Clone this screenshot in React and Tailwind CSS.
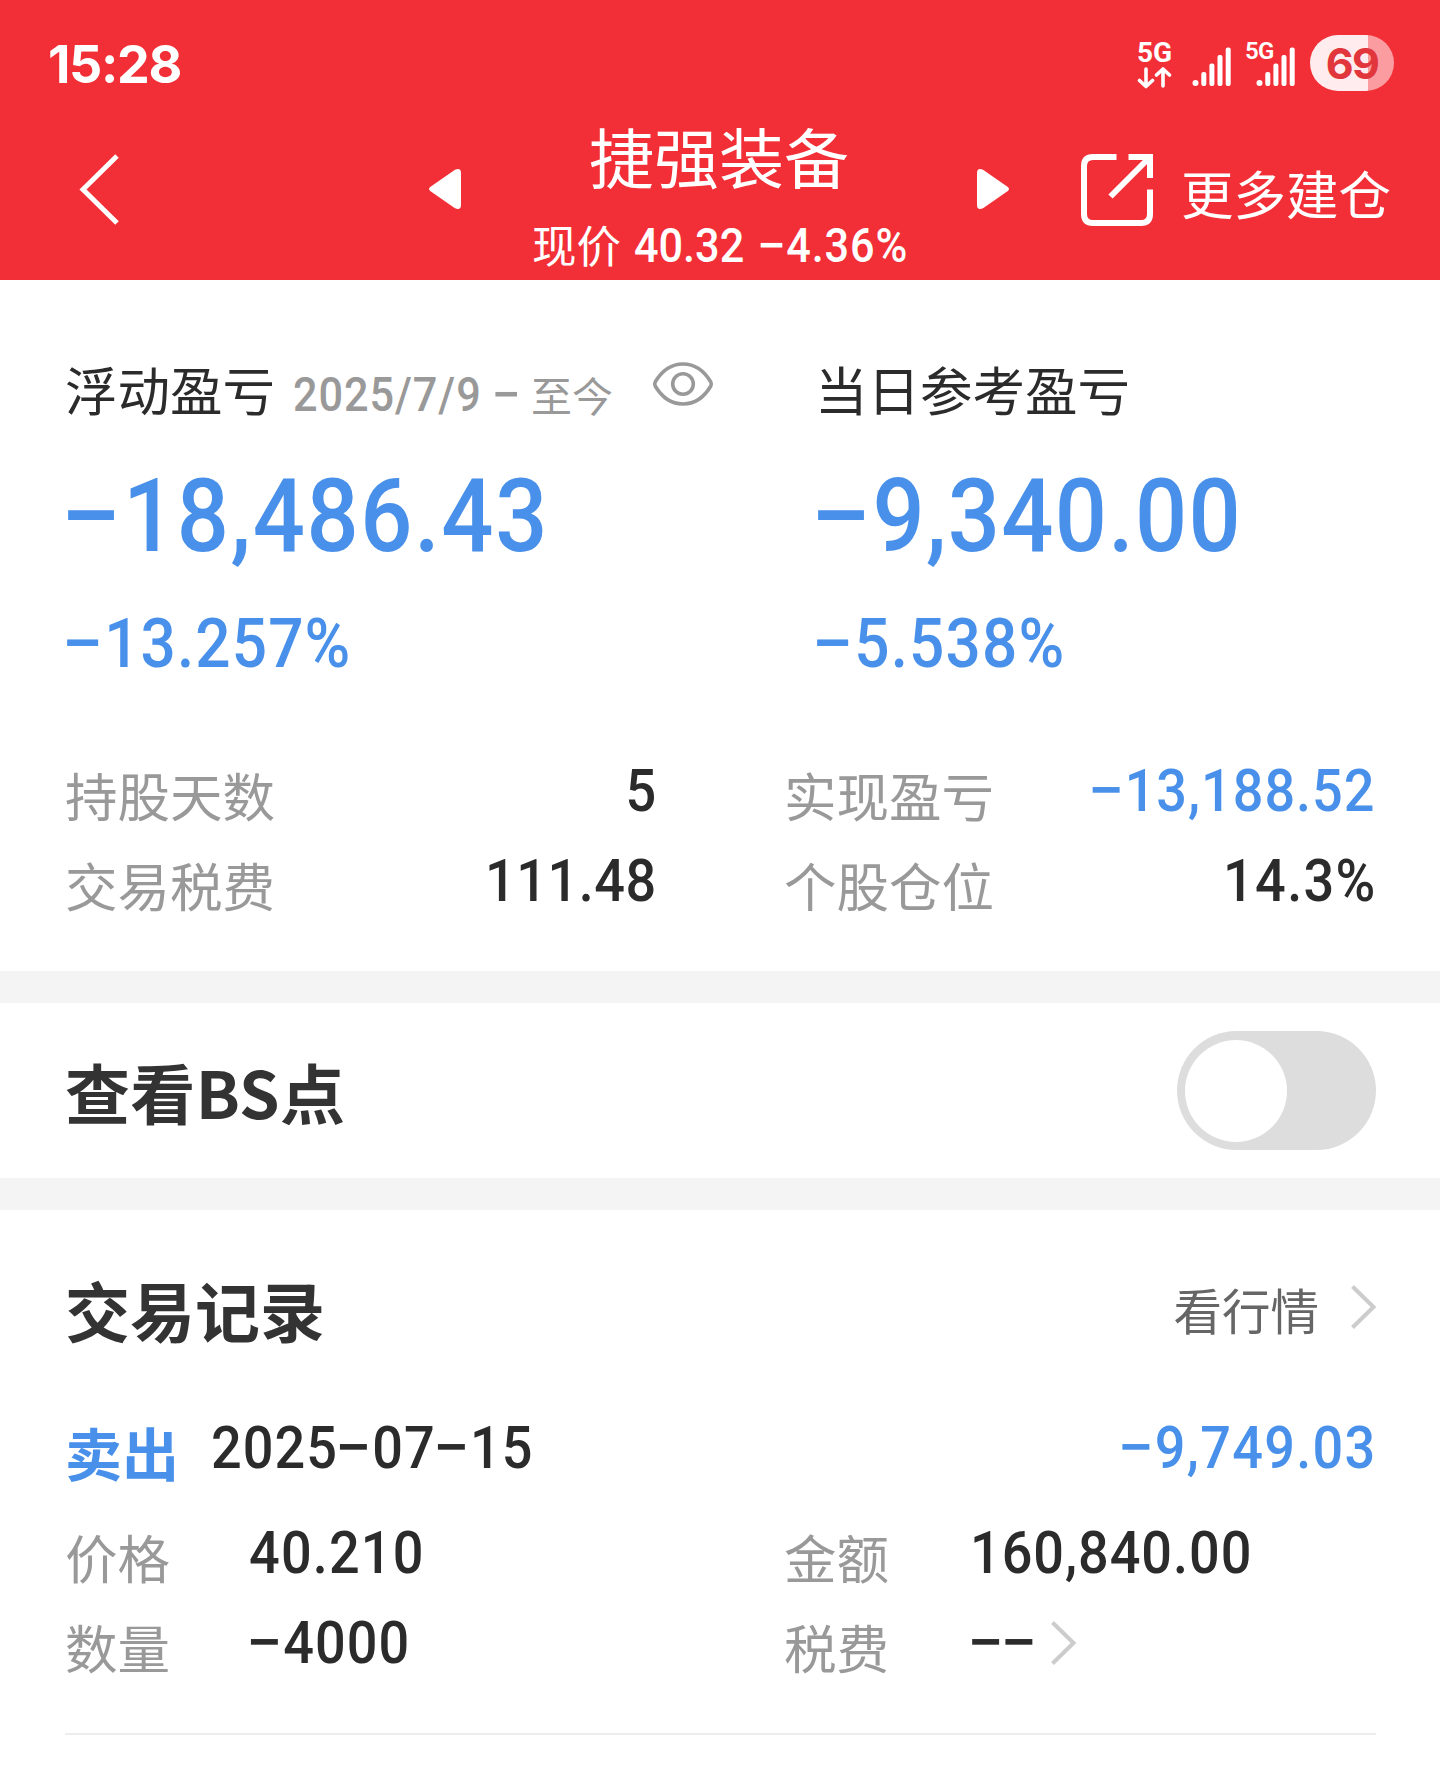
import clsx from 'clsx';

const stats = [
  { label: '持股天数', value: '5' },
  { label: '实现盈亏', value: '−13,188.52', loss: true, tracking: 'tracking-[0.018em]' },
  { label: '交易税费', value: '111.48', tracking: 'tracking-[0.01em] -mr-px' },
  { label: '个股仓位', value: '14.3%', tracking: 'tracking-[0.025em] -mr-0.5' },
];

// Condensed figures, squeezed from the side they are aligned to.
// The minus sign is drawn a little wider than the font has it.
const Num = ({ children, className }) => (
  <span
    className={clsx(
      "inline-block shrink-0 whitespace-nowrap font-['Roboto','Noto_Sans_CJK_SC',sans-serif] font-medium",
      className
    )}
  >
    {children.split(/(−)/).map((part, i) =>
      part === '−' ? (
        <span key={i} className="mr-[0.05em] inline-block scale-x-120">
          −
        </span>
      ) : (
        part
      )
    )}
  </span>
);

const SignalBars = () => (
  <svg width="40" height="40" viewBox="0 0 40 40" fill="#fff">
    <circle cx="3.500" cy="36" r="3" />
    <rect x="9.300" y="25" width="5" height="14" rx="2" />
    <rect x="17.400" y="16.500" width="5" height="22.500" rx="2" />
    <rect x="25.500" y="8" width="5" height="31" rx="2" />
    <rect x="33.700" y="0.500" width="5" height="38.500" rx="2" />
  </svg>
);

const StatusBar = () => (
  <div className="flex h-[126px] items-center justify-between pl-12 pr-[46px]">
    <span className="pt-1 font-['Inter',sans-serif] text-[52px] font-bold leading-none tracking-[-0.025em]">
      15:28
    </span>
    <div className="flex h-14 items-start">
      <div className="mt-[5px] flex w-[35px] flex-col items-center">
        <span className="font-['Roboto',sans-serif] text-[28px] font-bold leading-[26px]">5G</span>
        <svg
          className="mt-px"
          width="35"
          height="22"
          viewBox="0 0 35 22"
          fill="none"
          stroke="#fff"
          strokeWidth="3.6"
          strokeLinecap="round"
          strokeLinejoin="round"
        >
          <path d="M9 2v17.500M2.500 13.500l6.500 6 6.500-6" />
          <path d="M26 19V2M19.500 8 26 2l6.500 6" />
        </svg>
      </div>
      <div className="ml-5 mt-3">
        <SignalBars />
      </div>
      <div className="relative ml-6 mt-3">
        <SignalBars />
        <span className="absolute -left-[11px] -top-[8px] font-['Roboto',sans-serif] text-[24px] font-semibold leading-[24px] tracking-[-0.03em]">
          5G
        </span>
      </div>
      <div className="ml-[14px] flex h-14 w-[84px] items-center justify-center rounded-full bg-[linear-gradient(to_right,#ffecee_58px,#fb9da0_58px)] font-['Inter',sans-serif] text-[43px] font-bold leading-none tracking-[-0.04em] text-[#e2363d]">
        69
      </div>
    </div>
  </div>
);

const NavBar = () => (
  <div className="flex h-[154px]">
    <div className="flex w-[429px] pl-[78px] pt-[27px]">
      <svg width="44" height="72" viewBox="0 0 44 72" fill="none" stroke="#fff" strokeWidth="5">
        <path d="M39 3 5 36.500l34 33.500" />
      </svg>
    </div>
    <svg className="mt-[43px]" width="32" height="40" viewBox="0 0 32 40" fill="#fff">
      <path d="M1.200 18 26 .8Q32-1.500 32 4v32q0 5.500-6 3.200L1.200 22q-2.400-2 0-4Z" />
    </svg>
    <div className="flex w-[516px] flex-col items-center">
      <h1 className="-mt-[3px] h-[89px] shrink-0 text-[65px] leading-[64px]">捷强装备</h1>
      <div className="flex h-[68px] shrink-0 items-center text-[44.5px] leading-[64px]">
        <span className="-mt-[5px]">现价</span>
        <Num className="ml-[13px] w-[125px] origin-left scale-x-90 text-[48px]">
          40.32
        </Num>
        <Num className="w-[147px] origin-left scale-x-90 text-[48px] tracking-[0.02em]">−4.36%</Num>
      </div>
    </div>
    <svg className="mt-[43px]" width="32" height="40" viewBox="0 0 32 40" fill="#fff">
      <path d="M30.800 18 6 .8Q0-1.500 0 4v32q0 5.500 6 3.200L30.800 22q2.400-2 0-4Z" />
    </svg>
    <svg
      className="ml-[72px] mt-7"
      width="72"
      height="72"
      viewBox="0 0 72 72"
      fill="none"
      stroke="#fff"
      strokeWidth="6"
    >
      <path d="M35.500 3H12Q3 3 3 12v48q0 9 9 9h48q9 0 9-9V35.500" />
      <path d="M47.500 3H69v21M68 4 29.500 42.500" />
    </svg>
    <span className="ml-7 mt-[36px] text-[52.5px] leading-[60px]">更多建仓</span>
  </div>
);

const EyeIcon = () => (
  <svg
    width="62"
    height="46"
    viewBox="0 0 62 46"
    fill="none"
    stroke="#999"
    strokeWidth="3.6"
    strokeLinejoin="round"
  >
    <path d="M3.200 21C10 9.500 19.500 3 31 3s21 6.500 27.800 18q1 2 0 4C52 36.500 42.500 43 31 43S10 36.500 3.200 25q-1-2 0-4Z" />
    <circle cx="31" cy="23" r="10.300" />
  </svg>
);

const ChevronRight = ({ className }) => (
  <svg
    className={className}
    width="28"
    height="46"
    viewBox="0 0 28 46"
    fill="none"
    stroke="#ccc"
    strokeWidth="4"
  >
    <path d="M2.500 2.500 23.500 23l-21 20.500" />
  </svg>
);

const Summary = () => (
  <section className="pb-[45px] pt-[70px]">
    <div className="flex text-[#4990ea]">
      <div className="w-[750px] shrink-0 pl-[65px]">
        <div className="flex h-[72px] items-center whitespace-nowrap text-[#2b2b2b]">
          <h2 className="pt-1 text-[52.5px] leading-[72px]">浮动盈亏</h2>
          <div className="flex items-center pt-[16px] text-[41px] leading-[56px] text-[#999]">
            <Num className="ml-[18px] w-[238px] origin-left scale-x-90 pt-0.5 text-[48px] tracking-[0.022em]">
              2025/7/9 −
            </Num>
            <span>至今</span>
          </div>
          <div className="mb-1 ml-[39px]">
            <EyeIcon />
          </div>
        </div>
        <Num className="mt-[42px] block origin-left scale-x-90 text-[102px] leading-[104px] tracking-[0.018em]">
          −18,486.43
        </Num>
        <Num className="mt-[41px] block origin-left scale-x-90 text-[69px] leading-[70px] tracking-[0.018em]">
          −13.257%
        </Num>
      </div>
      <div className="pl-[65px]">
        <h2 className="pt-1 text-[52.5px] leading-[68px] text-[#2b2b2b]">当日参考盈亏</h2>
        <Num className="mt-[42px] block origin-left scale-x-90 text-[102px] leading-[104px] tracking-[0.014em]">
          −9,340.00
        </Num>
        <Num className="mt-[41px] block origin-left scale-x-90 text-[69px] leading-[70px] tracking-[0.019em]">
          −5.538%
        </Num>
      </div>
    </div>
    <dl className="mt-[67px] grid grid-cols-[591px_591px] gap-x-[128px] pl-[65px]">
      {stats.map(({ label, value, loss, tracking }) => (
        <div key={label} className="flex h-[90px] items-center justify-between">
          <dt className="pt-[5px] text-[52.5px] leading-[60px] text-[#999]">{label}</dt>
          <dd className={loss ? 'text-[#4990ea]' : 'text-[#2b2b2b]'}>
            <Num className={clsx('origin-right scale-x-90 text-[60px] leading-[60px]', tracking)}>
              {value}
            </Num>
          </dd>
        </div>
      ))}
    </dl>
  </section>
);

const BsToggle = () => (
  <section className="flex h-[175px] items-center justify-between pl-[65px] pr-16">
    <h2 className="text-[65px] font-bold leading-[80px] tracking-[0.005em] text-[#333]">
      查看BS点
    </h2>
    <button
      type="button"
      role="switch"
      aria-checked="false"
      className="flex h-[119px] w-[199px] items-center rounded-full bg-[#ddd] p-2"
    >
      <span className="size-[102px] rounded-full bg-white" />
    </button>
  </section>
);

const TradeField = ({ label, children, className }) => (
  <div className="flex h-[90px] items-center">
    <dt className={clsx('pt-[5px] text-[52.5px] leading-[60px] text-[#999]', className)}>
      {label}
    </dt>
    <dd className="flex items-center text-[#2b2b2b]">{children}</dd>
  </div>
);

const Trades = () => (
  <section className="pl-[65px] pr-16 pt-[59px]">
    <div className="flex h-20 items-center justify-between">
      <h2 className="text-[65px] font-bold leading-[80px] text-[#333]">交易记录</h2>
      <div className="-mr-0.5 flex items-center text-[48.5px] leading-[60px] text-[#666]">
        看行情
        <ChevronRight className="-mt-1 ml-[31px]" />
      </div>
    </div>
    <div className="mt-[54px] flex h-[90px] items-center text-[60px] leading-[60px]">
      <span className="w-[146px] pt-[5px] text-[57px] font-bold text-[#4990ea]">卖出</span>
      <Num className="origin-left scale-x-90 tracking-[0.02em] text-[#2b2b2b]">2025−07−15</Num>
      <Num className="ml-auto origin-right scale-x-90 tracking-[0.024em] text-[#4990ea]">
        −9,749.03
      </Num>
    </div>
    <dl className="mt-[15px] grid grid-cols-[719px_1fr] border-b-2 border-[#ededed] pb-[45px]">
      <TradeField label="价格" className="w-[184px]">
        <Num className="origin-left scale-x-90 text-[60px] leading-[60px] tracking-[0.022em]">
          40.210
        </Num>
      </TradeField>
      <TradeField label="金额" className="w-[186px]">
        <Num className="origin-left scale-x-90 text-[60px] leading-[60px] tracking-[0.018em]">
          160,840.00
        </Num>
      </TradeField>
      <TradeField label="数量" className="w-[184px]">
        <Num className="origin-left scale-x-90 text-[60px] leading-[60px] tracking-[0.02em]">
          −4000
        </Num>
      </TradeField>
      <TradeField label="税费" className="w-[186px]">
        <Num className="w-[80px] origin-left scale-x-90 text-[60px] leading-[60px]">−−</Num>
        <ChevronRight />
      </TradeField>
    </dl>
  </section>
);

const App = () => (
  <main className="h-[1780px] w-[1440px] overflow-hidden bg-white font-['Noto_Sans_CJK_SC',sans-serif]">
    <header className="h-[280px] bg-[#f22f37] text-white">
      <StatusBar />
      <NavBar />
    </header>
    <Summary />
    <div className="h-8 bg-[#f4f4f4]" />
    <BsToggle />
    <div className="h-8 bg-[#f4f4f4]" />
    <Trades />
  </main>
);

export default App;
